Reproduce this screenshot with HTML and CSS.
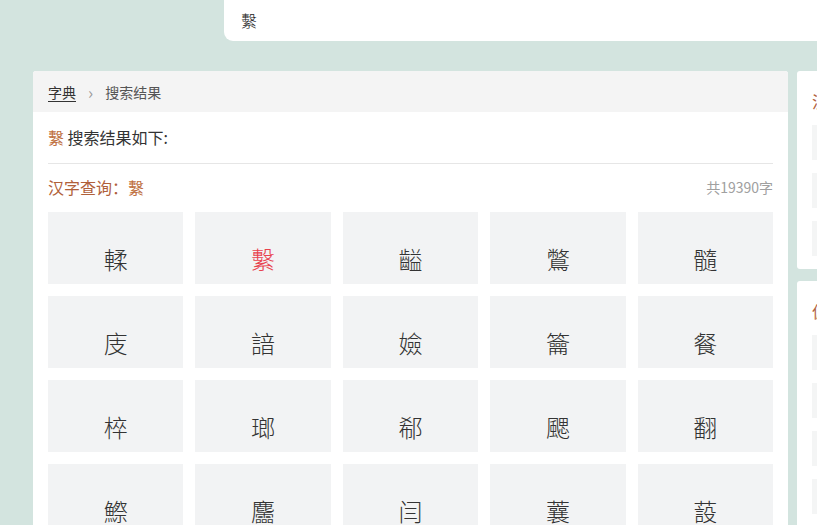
FILE: index.html
```html
<!DOCTYPE html>
<html lang="zh-CN">
<head>
<meta charset="utf-8">
<title>搜索结果</title>
<link rel="stylesheet" href="styles.css">
</head>
<body>
<div class="page">
  <header class="topbar">
    <div class="search">繫</div>
  </header>
  <div class="layout">
    <main class="main-card">
      <div class="crumbs">
        <a class="crumb-link" href="#">字典</a>
        <span class="crumb-sep">&#8250;</span>
        <span class="crumb-current">搜索结果</span>
      </div>
      <div class="content">
        <div class="result-title"><span class="hl">繫</span> 搜索结果如下:</div>
        <div class="query-row">
          <span class="query">汉字查询：<span class="query-char">繫</span></span>
          <span class="total">共19390字</span>
        </div>
        <div class="grid">
          <a class="cell" href="#">輮</a>
          <a class="cell active" href="#">繫</a>
          <a class="cell" href="#">齸</a>
          <a class="cell" href="#">鷩</a>
          <a class="cell" href="#">髓</a>
          <a class="cell" href="#">庋</a>
          <a class="cell" href="#">諳</a>
          <a class="cell" href="#">嬐</a>
          <a class="cell" href="#">籥</a>
          <a class="cell" href="#">餐</a>
          <a class="cell" href="#">椊</a>
          <a class="cell" href="#">瑯</a>
          <a class="cell" href="#">郗</a>
          <a class="cell" href="#">颸</a>
          <a class="cell" href="#">翻</a>
          <a class="cell" href="#">鰶</a>
          <a class="cell" href="#">麢</a>
          <a class="cell" href="#">闫</a>
          <a class="cell" href="#">蘘</a>
          <a class="cell" href="#">蔎</a>
        </div>
      </div>
    </main>
    <aside class="sidebar">
      <section class="side-card">
        <h3 class="side-title">汉字</h3>
        <div class="side-item"></div>
        <div class="side-item"></div>
        <div class="side-item"></div>
      </section>
      <section class="side-card">
        <h3 class="side-title">偏旁</h3>
        <div class="side-item"></div>
        <div class="side-item"></div>
        <div class="side-item"></div>
        <div class="side-item"></div>
      </section>
    </aside>
  </div>
</div>
</body>
</html>
```

FILE: styles.css
```css
html, body {
  margin: 0;
  padding: 0;
}
body {
  background: #d3e4df;
  font-family: "Noto Sans CJK SC", "Noto Sans", sans-serif;
  color: #333;
  overflow: hidden;
}
.page {
  width: 817px;
  height: 525px;
  overflow: hidden;
}
.topbar {
  display: flex;
  padding-left: 224px;
}
.search {
  flex: 0 0 700px;
  height: 41px;
  background: #fff;
  border-radius: 0 0 0 9px;
  box-sizing: border-box;
  padding-left: 17px;
  font-size: 16px;
  line-height: 41px;
  color: #222;
  font-weight: 300;
}
.layout {
  display: flex;
  align-items: flex-start;
  margin-top: 30px;
  padding-left: 33px;
  gap: 9px;
}
.main-card {
  flex: 0 0 755px;
  background: #fff;
  border-radius: 3px 3px 0 0;
  min-height: 470px;
}
.crumbs {
  height: 41px;
  background: #f4f4f4;
  display: flex;
  align-items: center;
  padding-left: 15px;
  font-size: 14px;
  border-radius: 3px 3px 0 0;
}
.crumb-link {
  color: #333;
  text-decoration: underline;
  text-underline-offset: 3px;
}
.crumb-sep {
  color: #999;
  margin: 0 12px 0 12px;
  font-size: 17px;
  line-height: 1;
}
.crumb-current {
  color: #555;
}
.content {
  padding: 0 15px;
}
.result-title {
  height: 51px;
  line-height: 51px;
  font-size: 16px;
  color: #333;
  border-bottom: 1px solid #e6e6e6;
}
.hl {
  color: #c0703f;
}
.query-row {
  display: flex;
  justify-content: space-between;
  align-items: center;
  margin-top: 10px;
  height: 26px;
}
.query {
  font-size: 16px;
  color: #b0603a;
}
.query-char {
  color: #c0703f;
}
.total {
  font-size: 14px;
  color: #a0a0a0;
}
.grid {
  display: grid;
  grid-template-columns: repeat(5, 1fr);
  gap: 12px;
  margin-top: 12px;
}
.cell {
  display: block;
  height: 72px;
  box-sizing: border-box;
  padding-top: 33px;
  background: #f2f3f4;
  text-align: center;
  font-size: 24px;
  line-height: 28px;
  font-weight: 300;
  color: #333;
  text-decoration: none;
}
.cell.active {
  color: #e8424e;
}
.sidebar {
  flex: 0 0 300px;
  display: flex;
  flex-direction: column;
  gap: 12px;
}
.side-card {
  background: #fff;
  border-radius: 3px;
  padding: 18px 14px 13px 15px;
}
.side-title {
  margin: 0 0 12px;
  font-size: 16px;
  line-height: 24px;
  font-weight: normal;
  color: #b0603a;
}
.side-item {
  height: 35px;
  background: #f4f5f5;
  margin-top: 13px;
}
.side-title + .side-item {
  margin-top: 0;
}
```
